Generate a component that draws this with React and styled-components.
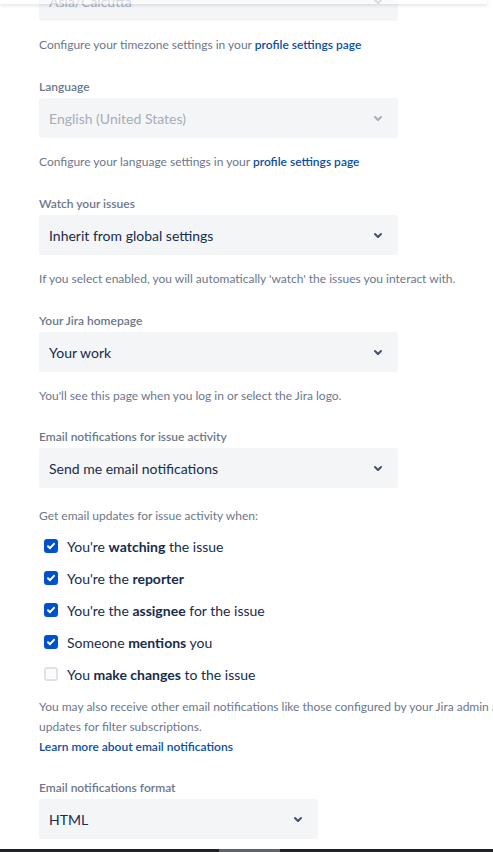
import React from "react";
import styled, { createGlobalStyle } from "styled-components";

const GlobalStyle = createGlobalStyle`
  html, body {
    margin: 0;
    padding: 0;
    background: #fff;
    overflow: hidden;
  }
  body {
    font-family: Lato, "Noto Sans", "Liberation Sans", sans-serif;
    color: #172b4d;
  }
`;

const Page = styled.div`
  position: relative;
  width: 493px;
  height: 852px;
  overflow: hidden;
  background: #fff;
`;

const HeaderShadow = styled.div`
  position: absolute;
  top: -10px;
  left: 0;
  right: 6px;
  height: 14px;
  background: #fff;
  opacity: 0.55;
  box-shadow: 0 2px 3px rgba(9, 30, 66, 0.18);
  z-index: 2;
`;

const Content = styled.div`
  width: 600px;
  padding-left: 39px;
  margin-top: -19px;
`;

const Field = styled.div`
  margin-top: ${(p) => p.gap || 26}px;
  &:first-child {
    margin-top: 0;
  }
`;

const Label = styled.div`
  font-size: 12px;
  line-height: 16px;
  font-weight: 600;
  color: #6b778c;
  margin-bottom: 3px;
`;

const Select = styled.div`
  width: ${(p) => p.w || 359}px;
  height: 40px;
  box-sizing: border-box;
  border-radius: 3px;
  background: #f4f5f7;
  display: flex;
  align-items: center;
  justify-content: space-between;
  padding: 0 8px 0 10px;
  font-size: 14px;
  color: ${(p) => (p.disabled ? "#a5adba" : "#172b4d")};
`;

const Help = styled.div`
  margin-top: ${(p) => p.top || 16}px;
  font-size: 12px;
  line-height: ${(p) => p.lh || 16}px;
  color: #6b778c;
  white-space: nowrap;
`;

const Link = styled.a`
  color: #0b4ea2;
  font-weight: 600;
  text-decoration: none;
`;

const CheckList = styled.div`
  margin-top: 10px;
  display: flex;
  flex-direction: column;
  gap: 8px;
`;

const CheckRow = styled.label`
  display: flex;
  align-items: center;
  height: 24px;
  font-size: 14px;
  color: #172b4d;
  b {
    font-weight: 700;
  }
`;

const Box = styled.span`
  width: 14px;
  height: 14px;
  box-sizing: border-box;
  margin: 0 9px 0 5px;
  border-radius: 3px;
  display: flex;
  align-items: center;
  justify-content: center;
  background: ${(p) => (p.checked ? "#0052cc" : "#fafbfc")};
  border: ${(p) => (p.checked ? "none" : "2px solid #dfe1e6")};
`;

const BottomBar = styled.div`
  position: absolute;
  left: 0;
  right: 0;
  bottom: 0;
  height: 3px;
  background: #202124;
`;

const Thumb = styled.div`
  position: absolute;
  left: 219px;
  top: 0;
  width: 61px;
  height: 3px;
  background: #5f6368;
`;

function Chevron({ light }) {
  return (
    <svg width="24" height="24" viewBox="0 0 24 24">
      <path
        fill={light ? "#a5adba" : "#42526e"}
        d="M8.292 10.293a1.009 1.009 0 0 0 0 1.419l2.939 2.965c.218.215.5.322.779.322s.556-.107.769-.322l2.93-2.955a1.01 1.01 0 0 0 0-1.419.987.987 0 0 0-1.406 0l-2.298 2.317-2.307-2.327a.99.99 0 0 0-1.406 0z"
      />
    </svg>
  );
}

function Check({ checked, children }) {
  return (
    <CheckRow>
      <Box checked={checked}>
        {checked ? (
          <svg width="10" height="10" viewBox="0 0 10 10">
            <path d="M2 5.2l2 2 4-4.4" fill="none" stroke="#fff" strokeWidth="2" strokeLinecap="round" strokeLinejoin="round" />
          </svg>
        ) : null}
      </Box>
      <span>{children}</span>
    </CheckRow>
  );
}

export default function App() {
  return (
    <Page>
      <GlobalStyle />
      <HeaderShadow />
      <Content>
        <Field>
          <Select disabled>
            <span>Asia/Calcutta</span>
            <Chevron light />
          </Select>
          <Help>
            Configure your timezone settings in your <Link href="#">profile settings page</Link>
          </Help>
        </Field>

        <Field>
          <Label>Language</Label>
          <Select disabled>
            <span>English (United States)</span>
            <Chevron light />
          </Select>
          <Help>
            Configure your language settings in your <Link href="#">profile settings page</Link>
          </Help>
        </Field>

        <Field>
          <Label>Watch your issues</Label>
          <Select>
            <span>Inherit from global settings</span>
            <Chevron />
          </Select>
          <Help>If you select enabled, you will automatically 'watch' the issues you interact with.</Help>
        </Field>

        <Field>
          <Label>Your Jira homepage</Label>
          <Select>
            <span>Your work</span>
            <Chevron />
          </Select>
          <Help>You'll see this page when you log in or select the Jira logo.</Help>
        </Field>

        <Field gap={25}>
          <Label>Email notifications for issue activity</Label>
          <Select>
            <span>Send me email notifications</span>
            <Chevron />
          </Select>
          <Help top={20}>Get email updates for issue activity when:</Help>
          <CheckList>
            <Check checked>You're <b>watching</b> the issue</Check>
            <Check checked>You're the <b>reporter</b></Check>
            <Check checked>You're the <b>assignee</b> for the issue</Check>
            <Check checked>Someone <b>mentions</b> you</Check>
            <Check>You <b>make changes</b> to the issue</Check>
          </CheckList>
          <Help top={11} lh={20}>
            You may also receive other email notifications like those configured by your Jira admin and
            <br />
            updates for filter subscriptions.
            <br />
            <Link href="#">Learn more about email notifications</Link>
          </Help>
        </Field>

        <Field gap={23}>
          <Label>Email notifications format</Label>
          <Select w={279}>
            <span>HTML</span>
            <Chevron />
          </Select>
        </Field>
      </Content>
      <BottomBar>
        <Thumb />
      </BottomBar>
    </Page>
  );
}
